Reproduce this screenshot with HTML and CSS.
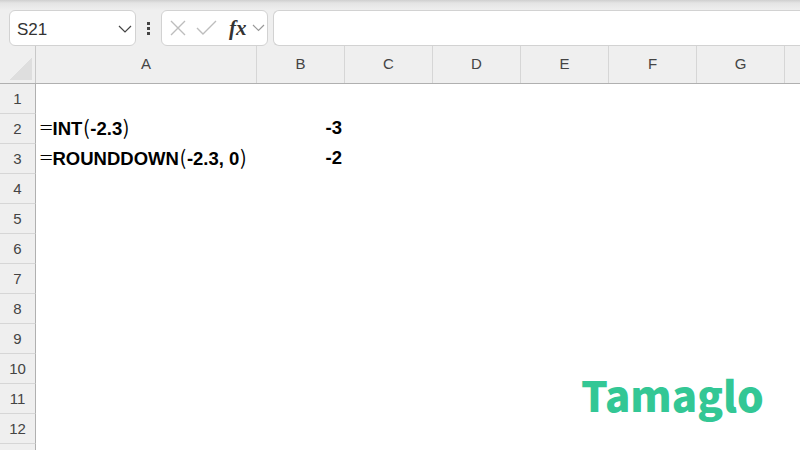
FILE: index.html
```html
<!DOCTYPE html>
<html lang="en">
<head>
    <meta charset="UTF-8">
    <title>Tamaglo</title>
    <link rel="stylesheet" href="styles.css">
</head>
<body>
    <div class="top-strip"></div>

    <div class="toolbar">
        <div class="box name-box">
            <span class="name-text">S21</span>
            <svg class="name-arrow" width="14" height="8" viewBox="0 0 14 8"><path d="M1 1l6 6 6-6" fill="none" stroke="#444" stroke-width="1.2"/></svg>
        </div>
        <div class="dots"><i></i><i></i><i></i></div>
        <div class="box fx-box">
            <svg width="18" height="18" viewBox="0 0 18 18"><path d="M2 2l14 14M16 2L2 16" fill="none" stroke="#bdbdbd" stroke-width="1.4"/></svg>
            <svg class="check" width="22" height="16" viewBox="0 0 22 16"><path d="M1 8l6 6L20 1" fill="none" stroke="#bdbdbd" stroke-width="1.4"/></svg>
            <span class="fx-text">fx</span>
            <svg width="13" height="8" viewBox="0 0 13 8"><path d="M1 1l5.500 5.500L12 1" fill="none" stroke="#999" stroke-width="1.200"/></svg>
        </div>
        <div class="box formula-box"></div>
    </div>

    <div class="col-headers">
        <div class="corner"><div class="corner-mark"></div></div>
        <div class="col col-a">A</div>
        <div class="col">B</div>
        <div class="col">C</div>
        <div class="col">D</div>
        <div class="col">E</div>
        <div class="col">F</div>
        <div class="col">G</div>
        <div class="col col-last"></div>
    </div>

    <div class="sheet">
        <div class="row"><div class="row-num">1</div></div>
        <div class="row">
            <div class="row-num">2</div>
            <div class="cell cell-a"><span class="eq">=</span>INT<span class="paren">(</span>-2.3<span class="paren">)</span></div>
            <div class="cell cell-b">-3</div>
        </div>
        <div class="row">
            <div class="row-num">3</div>
            <div class="cell cell-a"><span class="eq">=</span>ROUNDDOWN<span class="paren">(</span>-2.3, 0<span class="paren">)</span></div>
            <div class="cell cell-b">-2</div>
        </div>
        <div class="row"><div class="row-num">4</div></div>
        <div class="row"><div class="row-num">5</div></div>
        <div class="row"><div class="row-num">6</div></div>
        <div class="row"><div class="row-num">7</div></div>
        <div class="row"><div class="row-num">8</div></div>
        <div class="row"><div class="row-num">9</div></div>
        <div class="row"><div class="row-num">10</div></div>
        <div class="row"><div class="row-num">11</div></div>
        <div class="row"><div class="row-num">12</div></div>
        <div class="row"><div class="row-num"></div></div>
    </div>

    <div class="logo">Tamaglo</div>
</body>
</html>
```

FILE: styles.css
```css
* {
    margin: 0;
    padding: 0;
    box-sizing: border-box;
}

html, body {
    width: 800px;
    height: 450px;
    overflow: hidden;
}

body {
    position: relative;
    background: #efefef;
    font-family: "Liberation Sans", Arial, sans-serif;
}

.top-strip {
    height: 10px;
    background: linear-gradient(#cfcfcf, #e4e4e4 30%, #efefef);
}

.toolbar {
    display: flex;
    align-items: stretch;
    height: 36px;
    padding-left: 9px;
}

.box {
    flex: none;
    background: white;
    border: 1px solid #d2d2d2;
    border-radius: 6px;
    display: flex;
    align-items: center;
}

.name-box {
    width: 127px;
    padding: 0 3px 0 7px;
    justify-content: space-between;
}

.name-text {
    font-size: 17px;
    padding-top: 4px;
    color: #333;
}

.name-arrow {
    margin-top: 2px;
}

.dots {
    flex: none;
    width: 25px;
    display: flex;
    flex-direction: column;
    align-items: center;
    justify-content: center;
    gap: 2px;
}

.dots i {
    width: 3px;
    height: 3px;
    background: #444;
}

.fx-box {
    width: 107px;
    padding-left: 7px;
}

.check {
    margin-left: 9px;
}

.fx-text {
    font-family: "Liberation Serif", serif;
    font-style: italic;
    font-weight: bold;
    font-size: 21px;
    line-height: 30px;
    color: #333;
    margin: 0 5px 0 11px;
}

.formula-box {
    flex: 1;
    margin-left: 5px;
    border-right: none;
    border-radius: 6px 0 0 6px;
}

.col-headers {
    display: flex;
    height: 38px;
    border-bottom: 1px solid #b0b0b0;
}

.corner {
    flex: none;
    width: 36px;
    border-right: 1px solid #c8c8c8;
    padding: 12px 3px 0 10px;
}

.corner-mark {
    width: 22px;
    height: 22px;
    background: linear-gradient(135deg, transparent 50%, #dedede 50%);
}

.col {
    flex: none;
    width: 88px;
    border-right: 1px solid #d6d6d6;
    text-align: center;
    font-size: 15px;
    line-height: 36px;
    color: #444;
}

.col-a {
    width: 221px;
}

.col-last {
    flex: 1;
    border-right: none;
}

.sheet {
    height: 366px;
    overflow: hidden;
    background: white;
}

.row {
    display: flex;
    height: 30px;
    align-items: center;
}

.row-num {
    flex: none;
    width: 36px;
    height: 30px;
    background: #efefef;
    border-right: 1px solid #b0b0b0;
    border-bottom: 1px solid #d6d6d6;
    text-align: center;
    font-size: 15px;
    line-height: 30px;
    color: #444;
}

.cell {
    flex: none;
    font-size: 18.500px;
    font-weight: bold;
    color: black;
    padding-bottom: 2px;
}

.cell-a {
    width: 221px;
    padding-left: 4px;
}

.cell-b {
    width: 85px;
    text-align: right;
}

.eq, .paren {
    display: inline-block;
    font-family: "Noto Sans CJK JP", sans-serif;
    font-weight: 300;
    line-height: 20px;
    text-align: center;
}

.eq {
    width: 12.500px;
    font-size: 20px;
    transform: scaleX(1.200);
}

.paren {
    width: 8px;
    font-size: 20px;
    font-weight: 400;
}

.logo {
    position: absolute;
    left: 581px;
    top: 364px;
    font-family: "Noto Sans CJK JP", sans-serif;
    font-weight: 900;
    font-size: 42px;
    line-height: 60px;
    color: #33c795;
}
```
